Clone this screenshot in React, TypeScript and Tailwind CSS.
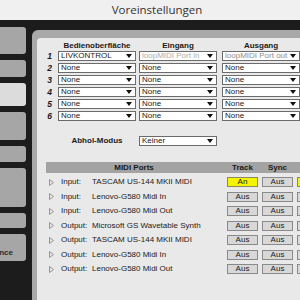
const selectRows = [
  { n: "1", a: "LIVKONTROL", b: "loopMIDI Port in", c: "loopMIDI Port out", first: true },
  { n: "2", a: "None", b: "None", c: "None", first: false },
  { n: "3", a: "None", b: "None", c: "None", first: false },
  { n: "4", a: "None", b: "None", c: "None", first: false },
  { n: "5", a: "None", b: "None", c: "None", first: false },
  { n: "6", a: "None", b: "None", c: "None", first: false },
];

const ports = [
  { kind: "Input:", name: "TASCAM US-144 MKII MIDI", on: true },
  { kind: "Input:", name: "Lenovo-G580 Midi In", on: false },
  { kind: "Input:", name: "Lenovo-G580 Midi Out", on: false },
  { kind: "Output:", name: "Microsoft GS Wavetable Synth", on: false },
  { kind: "Output:", name: "TASCAM US-144 MKII MIDI", on: false },
  { kind: "Output:", name: "Lenovo-G580 Midi In", on: false },
  { kind: "Output:", name: "Lenovo-G580 Midi Out", on: false },
];

function Arrow() {
  return (
    <svg width="6" height="4" viewBox="0 0 6 4" className="shrink-0">
      <path d="M0 0H6L3 4Z" fill="#111" />
    </svg>
  );
}

function Select({ value, tone }: { value: string; tone: string }) {
  return (
    <div className="flex h-[10px] w-[78px] shrink-0 items-center border border-[#6b6b6b] bg-white pl-[2px] pr-[3px]">
      <span className={`flex-1 truncate text-[8px] leading-none ${tone}`}>{value}</span>
      <Arrow />
    </div>
  );
}

function Btn({ label, yellow }: { label: string; yellow: boolean }) {
  return (
    <div
      className={
        yellow
          ? "flex h-[10px] w-[31px] shrink-0 items-center justify-center border border-[#8a8a5a] bg-[#f4f400] text-[8px] leading-none"
          : "flex h-[10px] w-[31px] shrink-0 items-center justify-center border border-[#8a8a8a] bg-[#d8d8d8] text-[8px] leading-none"
      }
    >
      {label}
    </div>
  );
}

export default function App() {
  return (
    <div className="flex h-[300px] w-[300px] flex-col overflow-hidden bg-[#1c1c1c] font-['Liberation_Sans',Arial,sans-serif] text-[#1a1a1a]">
      <div className="flex h-[20px] shrink-0 items-center justify-center bg-[#f0f0f0] pl-[14px] font-['Open_Sans',sans-serif] text-[11.5px] text-[#333]">
        Voreinstellungen
      </div>

      <div className="flex min-h-0 flex-1">
        {/* tabs on the left, mostly cut off */}
        <div className="flex w-[26px] shrink-0 flex-col gap-[6px] pt-[7px]">
          <div className="h-[27px] rounded-r-[3px] bg-[#a6a6a6]" />
          <div className="h-[17px] rounded-r-[3px] bg-[#a6a6a6]" />
          <div className="h-[23px] rounded-r-[3px] bg-[#dcdcdc]" />
          <div className="h-[28px] rounded-r-[3px] bg-[#a6a6a6]" />
          <div className="h-[16px] rounded-r-[3px] bg-[#a6a6a6]" />
          <div className="h-[39px] rounded-r-[3px] bg-[#a6a6a6]" />
          <div className="h-[15px] rounded-r-[3px] bg-[#a6a6a6]" />
          <div className="flex h-[27px] items-end justify-end whitespace-nowrap rounded-r-[3px] bg-[#a6a6a6] pb-[4px] pr-[13px] text-[8px] font-bold leading-none text-[#2a2a2a]">
            Maintenance
          </div>
        </div>

        {/* preferences panel */}
        <div className="ml-[6px] mt-[10px] min-w-0 flex-1 rounded-tl-[6px] bg-[#a9a9a9] pl-[5px] pt-[3px]">
          <div className="h-full w-[300px] rounded-tl-[4px] bg-[#e9e9e9]">
            <div className="mt-[5px] flex h-[10px] items-center pt-[6px] text-[8px] font-bold leading-none">
              <div className="w-[21px] shrink-0" />
              <div className="w-[78px] shrink-0 text-center">Bedienoberfläche</div>
              <div className="ml-[3px] w-[78px] shrink-0 text-center">Eingang</div>
              <div className="ml-[5px] w-[78px] shrink-0 text-center">Ausgang</div>
            </div>

            <div className="mt-[3px] flex flex-col gap-[2px]">
              {selectRows.map((r) => (
                <div key={r.n} className="flex h-[10px] items-center">
                  <div className="w-[21px] shrink-0 pr-[6px] text-right text-[8.5px] font-bold italic leading-none">
                    {r.n}
                  </div>
                  <Select value={r.a} tone="text-[#1a1a1a]" />
                  <div className="ml-[3px]">
                    <Select value={r.b} tone={r.first ? "text-[#adadad]" : "text-[#1a1a1a]"} />
                  </div>
                  <div className="ml-[5px]">
                    <Select value={r.c} tone={r.first ? "text-[#968a8a]" : "text-[#1a1a1a]"} />
                  </div>
                </div>
              ))}
            </div>

            <div className="mt-[15px] flex h-[10px] items-center">
              <div className="w-[21px] shrink-0" />
              <div className="w-[78px] shrink-0 text-center text-[8px] font-bold leading-none">Abhol-Modus</div>
              <div className="ml-[3px]">
                <Select value="Keiner" tone="text-[#1a1a1a]" />
              </div>
            </div>

            <div className="ml-[9px] mt-[16px]">
              <div className="flex h-[11px] items-center bg-[#a3a3a3] text-[8px] font-bold leading-none">
                <div className="w-[176px] shrink-0 text-center">MIDI Ports</div>
                <div className="ml-[5px] w-[31px] shrink-0 text-center">Track</div>
                <div className="ml-[4px] w-[31px] shrink-0 text-center">Sync</div>
              </div>

              <div className="mt-[2px] flex flex-col">
                {ports.map((p, i) => (
                  <div key={i} className="flex h-[14.5px] items-center text-[8px] leading-none">
                    <div className="w-[15px] shrink-0 pl-[3px]">
                      <svg width="5" height="7" viewBox="0 0 5 7">
                        <path d="M0.5 0.5L4.5 3.5L0.5 6.5Z" fill="none" stroke="#8a8a8a" strokeWidth="0.9" />
                      </svg>
                    </div>
                    <div className="w-[31px] shrink-0">{p.kind}</div>
                    <div className="w-[135px] shrink-0 truncate">{p.name}</div>
                    <Btn label={p.on ? "An" : "Aus"} yellow={p.on} />
                    <div className="ml-[4px]">
                      <Btn label="Aus" yellow={false} />
                    </div>
                    <div className="ml-[4px]">
                      <Btn label="" yellow={p.on} />
                    </div>
                  </div>
                ))}
              </div>
            </div>
          </div>
        </div>
      </div>
    </div>
  );
}
